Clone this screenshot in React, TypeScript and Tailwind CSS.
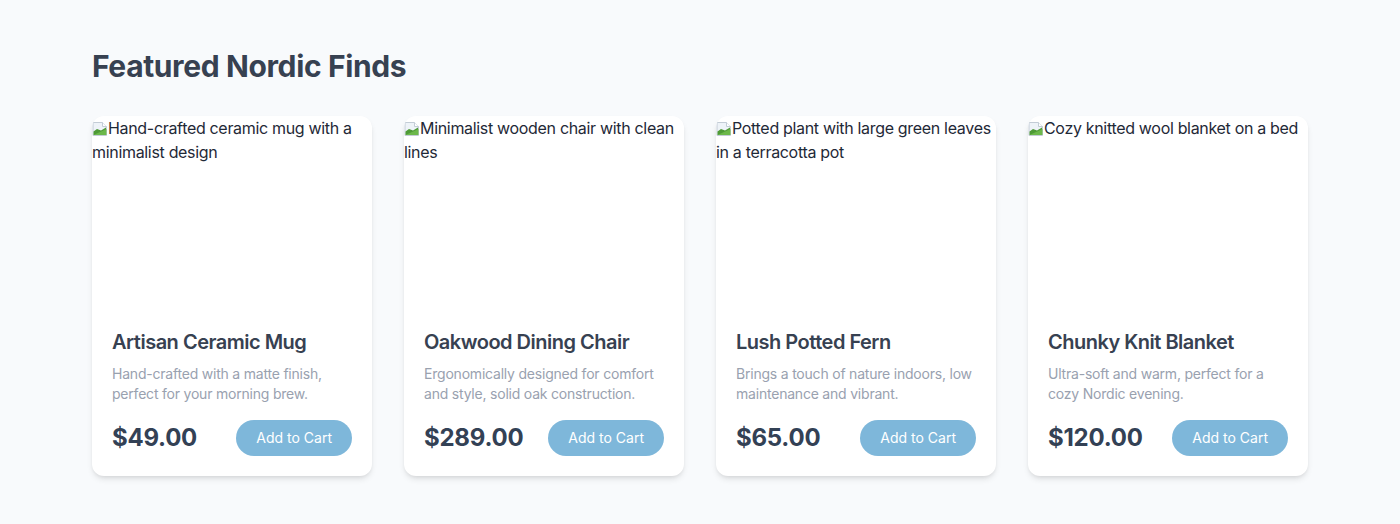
import React from "react";

interface Product {
  name: string;
  desc: string;
  price: string;
  alt: string;
}

const products: Product[] = [
  {
    name: "Artisan Ceramic Mug",
    desc: "Hand-crafted with a matte finish, perfect for your morning brew.",
    price: "$49.00",
    alt: "Hand-crafted ceramic mug with a minimalist design",
  },
  {
    name: "Oakwood Dining Chair",
    desc: "Ergonomically designed for comfort and style, solid oak construction.",
    price: "$289.00",
    alt: "Minimalist wooden chair with clean lines",
  },
  {
    name: "Lush Potted Fern",
    desc: "Brings a touch of nature indoors, low maintenance and vibrant.",
    price: "$65.00",
    alt: "Potted plant with large green leaves in a terracotta pot",
  },
  {
    name: "Chunky Knit Blanket",
    desc: "Ultra-soft and warm, perfect for a cozy Nordic evening.",
    price: "$120.00",
    alt: "Cozy knitted wool blanket on a bed",
  },
];

// broken image placeholder, like the browser draws it
const BrokenImage = () => (
  <svg width="16" height="16" viewBox="0 0 16 16" className="inline-block align-[-3px]">
    <path d="M1 1.5h9.5l4 4v9h-13.5z" fill="#eef3f8" stroke="#c3ccd6" strokeWidth="1" />
    <path d="M10.5 1.5v4h4" fill="#ffffff" stroke="#c3ccd6" strokeWidth="1" />
    <path d="M1.5 14V10.5l3.5-2.5 4 1.5 5-3v7.5z" fill="#4e9a36" />
    <path d="M1.5 14l13-6v6z" fill="#6cb84a" />
  </svg>
);

const ProductCard = ({ p }: { p: Product }) => (
  <div className="bg-white rounded-xl shadow-md overflow-hidden flex flex-col">
    <div className="h-48 text-base leading-6 tracking-[-0.02em] text-[#1f2937]">
      <BrokenImage />
      {p.alt}
    </div>
    <div className="p-5">
      <h3 className="text-xl leading-7 font-semibold tracking-[-0.025em] text-[#374151]">{p.name}</h3>
      <p className="mt-2 text-sm leading-5 tracking-[-0.015em] text-gray-400">{p.desc}</p>
      <div className="mt-4 flex items-center justify-between">
        <span className="text-2xl leading-8 font-bold tracking-[-0.01em] text-[#334155]">{p.price}</span>
        <button className="bg-[#7eb7da] text-white text-sm leading-5 px-5 py-2 rounded-full">
          Add to Cart
        </button>
      </div>
    </div>
  </div>
);

export default function App() {
  return (
    <div className="min-h-screen bg-[#f8fafc]" style={{ fontFamily: "Inter, 'Noto Sans', sans-serif" }}>
      <div className="max-w-7xl mx-auto px-8 py-12">
        <h2 className="text-3xl leading-9 font-bold tracking-[-0.0125em] text-[#374151] mb-8">
          Featured Nordic Finds
        </h2>
        <div className="grid grid-cols-4 gap-8">
          {products.map((p) => (
            <ProductCard key={p.name} p={p} />
          ))}
        </div>
      </div>
    </div>
  );
}
